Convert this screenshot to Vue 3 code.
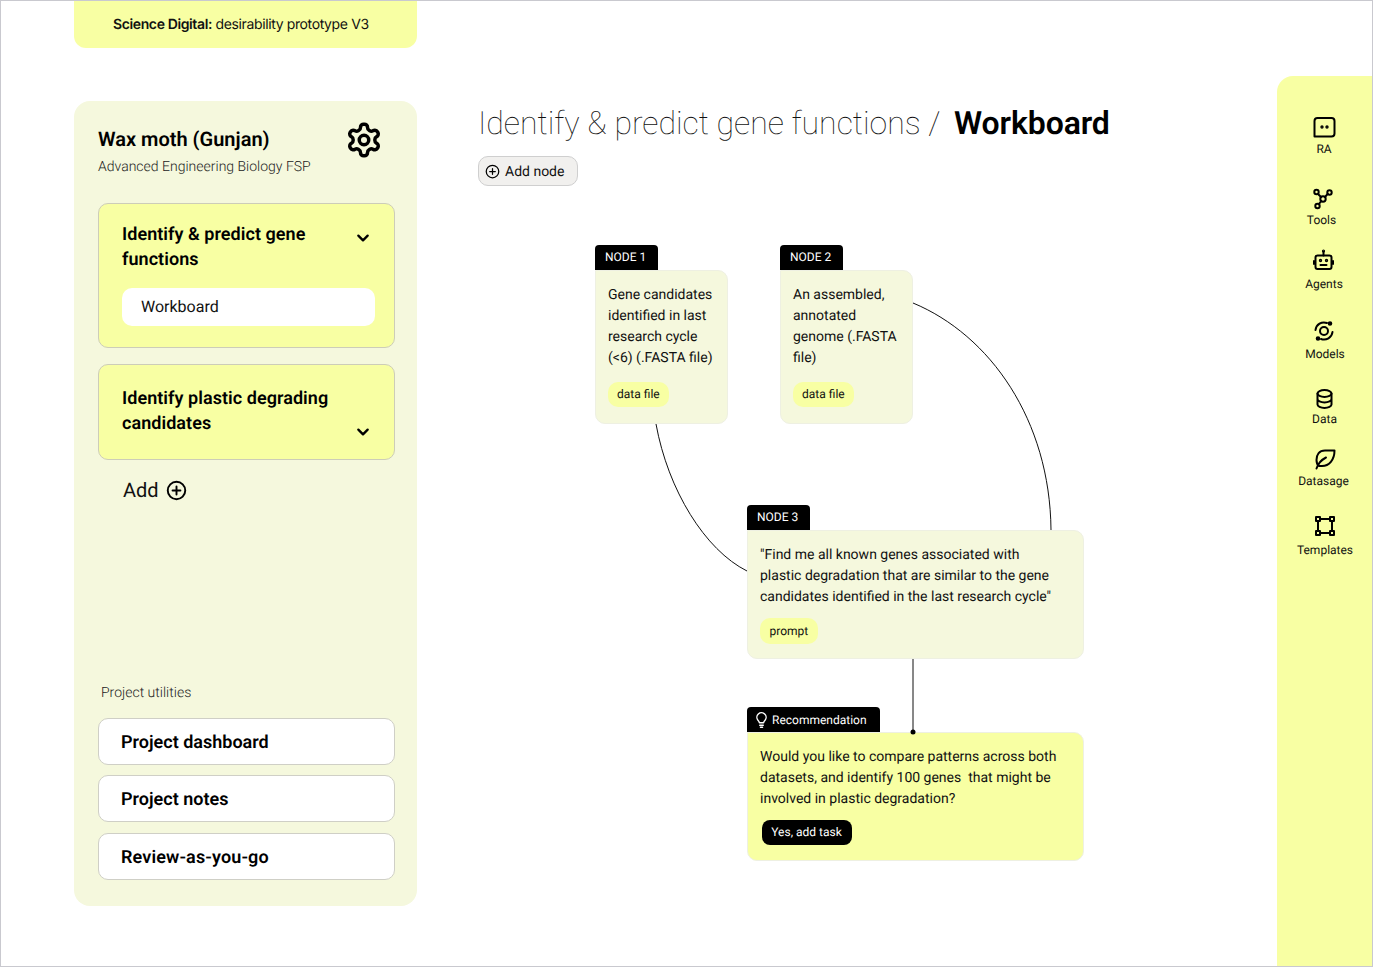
<script setup>
const nodes = [
  { id: 1, tag: 'NODE 1', x: 178, y: 59, w: 133, text: 'Gene candidates identified in last research cycle (<6) (.FASTA file)', chip: 'data file' },
  { id: 2, tag: 'NODE 2', x: 363, y: 59, w: 133, text: 'An assembled, annotated genome (.FASTA file)', chip: 'data file' },
  { id: 3, tag: 'NODE 3', x: 330, y: 319, w: 337, text: '"Find me all known genes associated with plastic degradation that are similar to the gene candidates identified in the last research cycle"', chip: 'prompt' },
]
// top: icon top in page pixels; gap: space between icon and label
const railData = [
  { label: 'RA', top: 115, gap: 3, ix: -0.5, lx: -0.5 },
  { label: 'Tools', top: 187, gap: 2, ix: -1, lx: -3 },
  { label: 'Agents', top: 248, gap: 5, ix: -1.5, lx: -0.5 },
  { label: 'Models', top: 319, gap: 4, ix: -1, lx: 0.5 },
  { label: 'Data', top: 387, gap: 1, ix: 0.5, lx: 0 },
  { label: 'Datasage', top: 447, gap: 3, ix: 0, lx: -1 },
  { label: 'Templates', top: 514, gap: 5, ix: 1, lx: 0.5 },
]
const railItems = railData.map((r, i) => {
  const prev = railData[i - 1]
  return {
    ...r,
    mt: i === 0 ? r.top - 76 : r.top - prev.top - 24 - prev.gap - 14,
  }
})
</script>

<template>
  <div class="frame">
    <aside class="left">
      <div class="banner"><b>Science Digital:</b> desirability prototype V3</div>
      <div class="panel">
        <div class="project">
          <div>
            <h2>Wax moth (Gunjan)</h2>
            <p>Advanced Engineering Biology FSP</p>
          </div>
          <svg class="gear" viewBox="0 0 24 24" fill="none" stroke="#000" stroke-width="2.200" stroke-linecap="round" stroke-linejoin="round">
            <path d="M12.22 2h-.44a2 2 0 0 0-2 2v.18a2 2 0 0 1-1 1.73l-.43.25a2 2 0 0 1-2 0l-.15-.08a2 2 0 0 0-2.73.73l-.22.38a2 2 0 0 0 .73 2.73l.15.1a2 2 0 0 1 1 1.72v.51a2 2 0 0 1-1 1.74l-.15.09a2 2 0 0 0-.73 2.73l.22.38a2 2 0 0 0 2.73.73l.15-.08a2 2 0 0 1 2 0l.43.25a2 2 0 0 1 1 1.73V20a2 2 0 0 0 2 2h.44a2 2 0 0 0 2-2v-.18a2 2 0 0 1 1-1.73l.43-.25a2 2 0 0 1 2 0l.15.08a2 2 0 0 0 2.73-.73l.22-.39a2 2 0 0 0-.73-2.73l-.15-.08a2 2 0 0 1-1-1.74v-.5a2 2 0 0 1 1-1.74l.15-.09a2 2 0 0 0 .73-2.73l-.22-.38a2 2 0 0 0-2.73-.73l-.15.08a2 2 0 0 1-2 0l-.43-.25a2 2 0 0 1-1-1.73V4a2 2 0 0 0-2-2z"/>
            <circle cx="12" cy="12" r="3"/>
          </svg>
        </div>

        <section class="group first">
          <div class="group-head">
            <h3>Identify &amp; predict gene functions</h3>
            <svg class="chev" viewBox="0 0 12 8" fill="none" stroke="#000" stroke-width="2" stroke-linecap="round" stroke-linejoin="round"><path d="M2 2l4 4 4-4"/></svg>
          </div>
          <div class="sub">Workboard</div>
        </section>

        <section class="group second">
          <div class="group-head">
            <h3>Identify plastic degrading candidates</h3>
            <svg class="chev low" viewBox="0 0 12 8" fill="none" stroke="#000" stroke-width="2" stroke-linecap="round" stroke-linejoin="round"><path d="M2 2l4 4 4-4"/></svg>
          </div>
        </section>

        <div class="add">
          <span>Add</span>
          <svg viewBox="0 0 24 24" fill="none" stroke="#000" stroke-width="2.200" stroke-linecap="round"><circle cx="12" cy="12" r="10"/><path d="M12 7.500v9M7.500 12h9"/></svg>
        </div>

        <div class="utilities">
          <div class="util-label">Project utilities</div>
          <div class="util first-util">Project dashboard</div>
          <div class="util second-util">Project notes</div>
          <div class="util third-util">Review-as-you-go</div>
        </div>
      </div>
    </aside>

    <main class="main">
      <h1><span class="crumb">Identify &amp; predict gene functions /</span><strong>Workboard</strong></h1>
      <button class="add-node">
        <svg viewBox="0 0 24 24" fill="none" stroke="#000" stroke-width="2" stroke-linecap="round"><circle cx="12" cy="12" r="10"/><path d="M12 7.500v9M7.500 12h9"/></svg>
        <span>Add node</span>
      </button>

      <div class="canvas">
        <article v-for="n in nodes" :key="n.id" class="node" :style="{ left: n.x + 'px', top: n.y + 'px', width: n.w + 'px' }">
          <div class="tab">{{ n.tag }}</div>
          <div class="card" :class="'card' + n.id">
            <p>{{ n.text }}</p>
            <span class="chip">{{ n.chip }}</span>
          </div>
        </article>

        <article class="node rec">
          <div class="tab rec-tab">
            <svg viewBox="0 0 24 24" fill="none" stroke="#fff" stroke-width="2" stroke-linecap="round" stroke-linejoin="round"><path d="M9 16.500c-.3-1.500-1-2.400-2-3.500a6.500 6.500 0 1 1 10 0c-1 1.100-1.700 2-2 3.500z"/><path d="M9.500 20h5M10.500 23h3"/></svg>
            Recommendation
          </div>
          <div class="card rec-card">
            <p>Would you like to compare patterns across both datasets, and identify 100 genes&nbsp; that might be involved in plastic degradation?</p>
            <button class="yes">Yes, add task</button>
          </div>
        </article>

        <svg class="wires" viewBox="417 186 860 780" width="860" height="780" fill="none" stroke="#111" stroke-width="1">
          <path d="M656 424C668 490 705 550 747 571"/>
          <path d="M913 303C990 335 1050 420 1051 530"/>
          <path d="M913 659V732"/>
          <circle cx="913" cy="732" r="2.500" fill="#000" stroke="none"/>
        </svg>
      </div>
    </main>

    <nav class="rail">
      <div v-for="(r, i) in railItems" :key="r.label" class="rail-item" :style="{ marginTop: r.mt + 'px' }">
        <svg :style="{ transform: 'translateX(' + r.ix + 'px)' }" viewBox="0 0 24 24" fill="none" stroke="#000" stroke-width="2" stroke-linecap="round" stroke-linejoin="round">
          <template v-if="i === 0">
            <path d="M2 21.500V6a3 3 0 0 1 3-3h14a3 3 0 0 1 3 3v12.500a3 3 0 0 1-3 3z"/>
            <circle cx="9.500" cy="12" r=".7"/><circle cx="14.500" cy="12" r=".7"/>
          </template>
          <template v-else-if="i === 1">
            <circle cx="5.500" cy="5" r="2.200"/><circle cx="18.500" cy="5.500" r="2.200"/><circle cx="6.500" cy="19" r="2.200"/><circle cx="12" cy="12" r="2.700"/>
            <path d="M7 7l3 3M16.700 6.800L14 10M7.800 17.200L10.300 14"/>
          </template>
          <template v-else-if="i === 2">
            <rect x="4" y="7.500" width="16" height="13.500" rx="2"/>
            <path d="M12 7.500V4M2.500 13v3M21.500 13v3M9 17h6"/>
            <circle cx="12" cy="3" r=".6"/><circle cx="9" cy="12.500" r=".7"/><circle cx="15" cy="12.500" r=".7"/>
          </template>
          <template v-else-if="i === 3">
            <circle cx="12" cy="12" r="4"/>
            <path d="M3.500 11A8.500 8.500 0 0 1 15 4M20.500 13A8.500 8.500 0 0 1 9 20"/>
            <circle cx="18" cy="4.500" r="1.300" fill="#000"/><circle cx="6" cy="19.500" r="1.300" fill="#000"/>
          </template>
          <template v-else-if="i === 4">
            <ellipse cx="12" cy="6.500" rx="7" ry="3.500"/>
            <path d="M5 6.500v11c0 1.900 3.100 3.500 7 3.500s7-1.600 7-3.500v-11M5 12c0 1.900 3.100 3.500 7 3.500s7-1.600 7-3.500"/>
          </template>
          <template v-else-if="i === 5">
            <path d="M3.500 21.500C5 17 8 13 13 10.500"/>
            <path d="M21.500 3.500H12C6 3.500 3.500 8 3.500 13c0 3 1 5 2.500 6h3C16 19 21.500 13 21.500 3.500z"/>
          </template>
          <template v-else>
            <rect x="3" y="3" width="4" height="4"/><rect x="17" y="3" width="4" height="4"/><rect x="3" y="17" width="4" height="4"/><rect x="17" y="17" width="4" height="4"/>
            <path d="M7 5h10M7 19h10M5 7v10M19 7v10"/>
          </template>
        </svg>
        <span :style="{ marginTop: r.gap + 'px', transform: 'translateX(' + r.lx + 'px)' }">{{ r.label }}</span>
      </div>
    </nav>
  </div>
</template>

<style>
html, body { margin: 0; background: #fff; }
</style>

<style scoped>
* { box-sizing: border-box; }
.frame {
  width: 1373px; height: 967px; border: 1px solid #c9c9cf; display: flex;
  font-family: Roboto, sans-serif; color: #111; overflow: hidden; background: #fff;
  text-rendering: geometricPrecision;
}
.left { width: 343px; margin-left: 73px; flex: none; display: flex; flex-direction: column; }
.banner {
  height: 47px; background: #f8ffa3; border-radius: 0 0 12px 12px; padding: 14px 0 0 39px;
  font: 400 14px/19px Inter, sans-serif; letter-spacing: -.38px;
}
.banner b { font-weight: 600; }
.panel {
  margin-top: 53px; height: 805px; background: #f5f8dd; border-radius: 16px;
  padding: 24px 22px 0 24px; display: flex; flex-direction: column;
}
.project { display: flex; justify-content: space-between; height: 78px; }
.project h2 { margin: 2px 0 0; font: 600 20px/24px Roboto, sans-serif; color: #000; }
.project p { margin: 7px 0 0; font: 300 14px/18px Roboto, sans-serif; color: #222; }
.gear { width: 38px; height: 38px; margin: -4px 12.500px 0 0; flex: none; }
.group { background: #f8ffa3; border: 1px solid #cdcdb8; border-radius: 10px; padding: 18px 19px 0 23px; }
.group.first { height: 145px; }
.group.second { height: 96px; margin-top: 16px; padding-top: 21px; }
.group-head { display: flex; justify-content: space-between; }
.group h3 { margin: 0; width: 215px; font: 600 18px/25px Roboto, sans-serif; color: #000; letter-spacing: .05px; }
.chev { width: 14px; height: 10px; margin: 11px 5px 0 0; flex: none; }
.chev.low { margin-top: 41px; }
.sub {
  margin-top: 16px; width: 253px; height: 38px; background: #fff; border-radius: 10px;
  padding-left: 19px; font: 400 16px/37px Roboto, sans-serif;
}
.add { display: flex; align-items: center; gap: 7px; margin: 17px 0 0 25px; font: 400 20px/26px Roboto, sans-serif; }
.add svg { width: 21px; height: 21px; }
.utilities { margin-top: auto; padding-bottom: 26px; }
.util-label { margin: 1px 0 16px 3px; font: 300 14px/18px Roboto, sans-serif; color: #222; }
.util {
  height: 47px; background: #fff; border: 1px solid #cfcfc6; border-radius: 10px; padding-left: 22px;
  font: 600 18px/47px Roboto, sans-serif; color: #000;
}
.second-util { margin-top: 10px; }
.third-util { margin-top: 11px; letter-spacing: .12px; }

.main { flex: 1; min-width: 0; position: relative; display: flex; flex-direction: column; }
h1 { margin: 100px 0 0 61px; height: 44px; display: flex; align-items: center; font-size: 32px; font-weight: 400; white-space: nowrap; }
.crumb { font-weight: 100; color: #111; }
h1 strong { font-size: 32px; font-weight: 600; margin-left: 13.500px; color: #000; letter-spacing: -.1px; }
.add-node {
  margin: 11px 0 0 61px; width: 100px; height: 30px; background: #f1f0ee; border: 1px solid #cfcfcf; border-radius: 10px;
  display: flex; align-items: center; gap: 5px; padding: 0 0 0 6px; font: 400 14px/28px Roboto, sans-serif; color: #111;
  text-rendering: geometricPrecision;
}
.add-node svg { width: 15px; height: 15px; }
.add-node span { padding-top: 2px; }
.canvas { position: relative; flex: 1; }
.wires { position: absolute; left: 0; top: 0; pointer-events: none; }
.node { position: absolute; }
.tab {
  display: inline-block; vertical-align: top; height: 25px; padding: 0 12px 0 10px; background: #000; color: #fff;
  border-radius: 4px 4px 0 0; font: 400 12px/25px Roboto, sans-serif;
}
.card { background: #f5f8dd; border: 1px solid #eef0e2; border-radius: 0 10px 10px 10px; padding: 14px 12px 0; }
.card p { margin: 0; max-width: 298px; font: 400 14px/21px Roboto, sans-serif; color: #111; }
.card1, .card2 { height: 154px; }
.card3 { height: 129px; }
.chip {
  display: block; width: fit-content; height: 25px; margin-top: 13px; padding: 0 9px; background: #f8ffa3; border-radius: 10px;
  font: 400 12px/25px Roboto, sans-serif; color: #111;
}
.card3 .chip { margin-top: 10px; height: 26px; line-height: 26px; padding: 0 9.500px; }
.rec { left: 330px; top: 521px; width: 337px; }
.rec-tab { display: inline-flex; align-items: center; gap: 2px; width: 133px; padding: 0 0 0 6px; line-height: 26px; }
.rec-tab svg { width: 17px; height: 17px; flex: none; }
.rec-card { height: 129px; background: #f8ffa3; border-color: #eef0e2; }
.yes {
  display: block; margin: 10px 0 0 2px; width: 90px; height: 25px; background: #000; color: #fff; border: none; border-radius: 8px;
  font: 400 12px/25px Roboto, sans-serif; padding: 0 1px 0 0; text-rendering: geometricPrecision;
}
.rail {
  width: 95px; margin-top: 75px; flex: none; background: #f8ffa3; border-radius: 16px 0 0 0;
  display: flex; flex-direction: column; align-items: center;
}
.rail-item { display: flex; flex-direction: column; align-items: center; }
.rail-item svg { width: 24px; height: 24px; }
.rail-item span { font: 400 12px/14px Roboto, sans-serif; color: #111; }
</style>
